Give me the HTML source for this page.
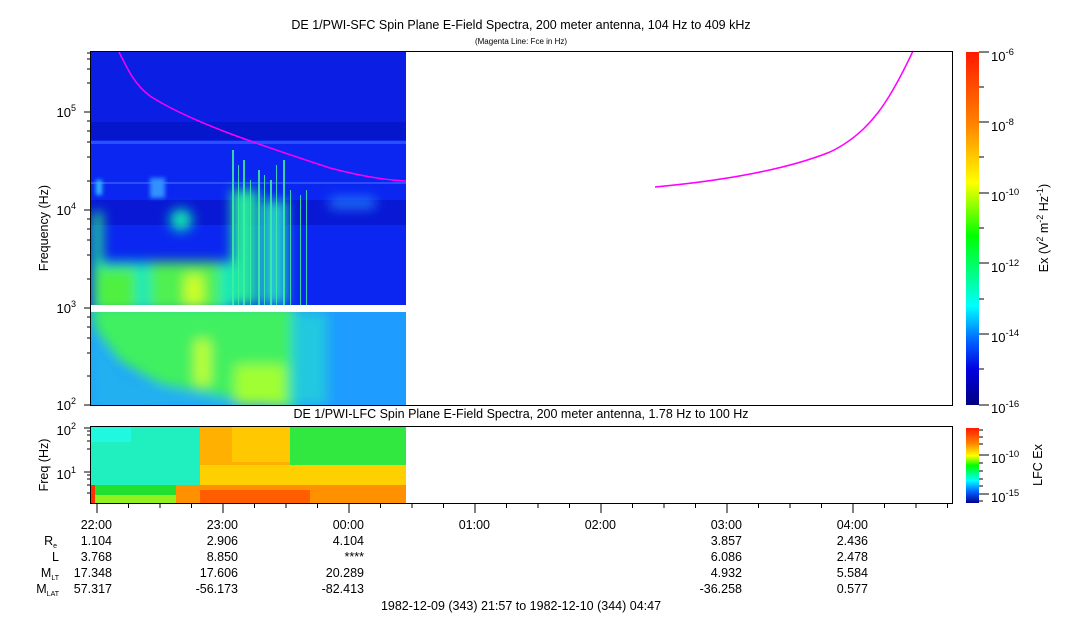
<!DOCTYPE html>
<html><head><meta charset="utf-8"><style>
body{margin:0;background:#fff;width:1083px;height:620px;overflow:hidden;font-family:"Liberation Sans",sans-serif}
svg{position:absolute;left:0;top:0}
text{font-family:"Liberation Sans",sans-serif;fill:#000}
</style></head><body>
<svg width="1083" height="620" viewBox="0 0 1083 620">
<defs>
<linearGradient id="cb" x1="0" y1="0" x2="0" y2="1">
<stop offset="0" stop-color="#ff1a00"/><stop offset="0.2" stop-color="#ff8000"/>
<stop offset="0.37" stop-color="#ffff00"/><stop offset="0.52" stop-color="#00ff00"/>
<stop offset="0.65" stop-color="#00ffa0"/><stop offset="0.72" stop-color="#00ffff"/>
<stop offset="0.82" stop-color="#0060ff"/><stop offset="0.9" stop-color="#0000e0"/>
<stop offset="1" stop-color="#000080"/></linearGradient>
<linearGradient id="cb2" x1="0" y1="0" x2="0" y2="1">
<stop offset="0" stop-color="#ff1a00"/><stop offset="0.2" stop-color="#ff8000"/>
<stop offset="0.37" stop-color="#ffff00"/><stop offset="0.5" stop-color="#00ff00"/>
<stop offset="0.7" stop-color="#00ffff"/><stop offset="0.85" stop-color="#0060ff"/>
<stop offset="1" stop-color="#000090"/></linearGradient>
<filter id="bl" filterUnits="userSpaceOnUse" x="0" y="0" width="1083" height="620"><feGaussianBlur stdDeviation="6"/></filter>
<filter id="bl2" filterUnits="userSpaceOnUse" x="0" y="0" width="1083" height="620"><feGaussianBlur stdDeviation="2"/></filter>
<clipPath id="c1"><rect x="91" y="52" width="315" height="253"/></clipPath>
<clipPath id="c2"><rect x="91" y="312" width="315" height="93"/></clipPath>
<clipPath id="c3"><rect x="91" y="427" width="315" height="76"/></clipPath>
</defs>
<text x="521" y="29" font-size="12.5" text-anchor="middle">DE 1/PWI-SFC  Spin Plane E-Field Spectra, 200 meter antenna, 104 Hz to 409 kHz</text>
<text x="521" y="44" font-size="8" text-anchor="middle">(Magenta Line: Fce in Hz)</text>
<g clip-path="url(#c1)">
<rect x="91" y="52" width="315" height="253" fill="#0a26f0"/>
<rect x="91" y="52" width="315" height="75" fill="#0a1ee4"/>
<rect x="91" y="122" width="315" height="18" fill="#0616cc"/>
<rect x="91" y="141" width="315" height="3" fill="#2a50ff"/>
<rect x="91" y="182" width="315" height="2" fill="#2a50ff"/>
<rect x="91" y="200" width="315" height="25" fill="#0818d4"/>
<g filter="url(#bl)">
<rect x="92" y="262" width="140" height="50" fill="#10e8c0"/>
<rect x="93" y="212" width="9" height="90" fill="#20f080"/>
<rect x="96" y="268" width="40" height="45" fill="#50f040"/>
<rect x="150" y="262" width="70" height="50" fill="#50f050"/>
<rect x="185" y="275" width="18" height="30" fill="#d0ff20"/>
<circle cx="181" cy="220" r="11" fill="#10f0b0"/>
<rect x="232" y="190" width="25" height="115" fill="#20e8a0"/>
<rect x="262" y="200" width="25" height="105" fill="#20c8d0"/>
<rect x="330" y="198" width="45" height="10" fill="#2080ff"/>
</g>
<g fill="#40f0a0" opacity="0.85">
<rect x="232" y="150" width="2" height="155"/><rect x="238" y="165" width="1" height="140"/>
<rect x="243" y="160" width="2" height="145"/><rect x="250" y="180" width="1" height="125"/>
<rect x="258" y="170" width="2" height="135"/><rect x="264" y="175" width="1" height="130"/>
<rect x="270" y="180" width="2" height="125"/><rect x="276" y="165" width="1" height="140"/>
<rect x="283" y="160" width="2" height="145"/><rect x="290" y="190" width="1" height="115"/>
<rect x="300" y="195" width="1" height="110"/><rect x="306" y="190" width="1" height="115"/>
</g>
<rect x="96" y="180" width="6" height="15" fill="#30c0ff" filter="url(#bl2)"/>
<rect x="150" y="178" width="15" height="20" fill="#3090ff" filter="url(#bl2)"/>
</g>
<g clip-path="url(#c2)">
<rect x="91" y="312" width="315" height="93" fill="#1e9cff"/>
<g filter="url(#bl)">
<polygon points="91,305 295,305 295,410 235,400 160,385 120,362 95,330" fill="#40f060"/>
<polygon points="91,335 120,372 160,390 230,402 230,410 91,410" fill="#20b0f0"/>
<rect x="195" y="340" width="15" height="45" fill="#c0ff30"/>
<rect x="235" y="365" width="50" height="40" fill="#a0ff30"/>
<rect x="292" y="312" width="35" height="93" fill="#20c8e0"/>
</g>
</g>
<path d="M119,52 C128,70 135,85 150,96 C190,122 260,145 330,168 C360,176 385,180 406,181" fill="none" stroke="#ff00ff" stroke-width="1.5"/>
<path d="M655,187 C730,180 790,168 830,152 C870,133 890,100 913,51" fill="none" stroke="#ff00ff" stroke-width="1.5"/>
<rect x="90.5" y="51.5" width="862" height="354" fill="none" stroke="#000"/>
<g stroke="#000">
<line x1="84" y1="112" x2="91" y2="112"/><line x1="84" y1="210" x2="91" y2="210"/>
<line x1="84" y1="308" x2="91" y2="308"/><line x1="84" y1="405" x2="91" y2="405"/>
<line x1="87" y1="53" x2="91" y2="53"/><line x1="87" y1="59" x2="91" y2="59"/><line x1="87" y1="69" x2="91" y2="69"/><line x1="87" y1="83" x2="91" y2="83"/>
<line x1="87" y1="121" x2="91" y2="121"/><line x1="87" y1="131" x2="91" y2="131"/><line x1="87" y1="142" x2="91" y2="142"/><line x1="87" y1="157" x2="91" y2="157"/><line x1="87" y1="181" x2="91" y2="181"/>
<line x1="87" y1="219" x2="91" y2="219"/><line x1="87" y1="229" x2="91" y2="229"/><line x1="87" y1="240" x2="91" y2="240"/><line x1="87" y1="255" x2="91" y2="255"/><line x1="87" y1="279" x2="91" y2="279"/>
<line x1="87" y1="317" x2="91" y2="317"/><line x1="87" y1="327" x2="91" y2="327"/><line x1="87" y1="338" x2="91" y2="338"/><line x1="87" y1="353" x2="91" y2="353"/><line x1="87" y1="376" x2="91" y2="376"/>
</g>
<g font-size="13" text-anchor="end">
<text x="76" y="117">10<tspan font-size="9" dy="-6">5</tspan></text>
<text x="76" y="215">10<tspan font-size="9" dy="-6">4</tspan></text>
<text x="76" y="313">10<tspan font-size="9" dy="-6">3</tspan></text>
<text x="76" y="410">10<tspan font-size="9" dy="-6">2</tspan></text>
</g>
<text transform="translate(48,228) rotate(-90)" font-size="12.5" text-anchor="middle">Frequency (Hz)</text>
<rect x="966" y="52" width="13" height="353" fill="url(#cb)"/>
<g stroke="#000"><line x1="979" y1="52" x2="989" y2="52"/><line x1="979" y1="122" x2="989" y2="122"/><line x1="979" y1="193" x2="989" y2="193"/><line x1="979" y1="263" x2="989" y2="263"/><line x1="979" y1="334" x2="989" y2="334"/><line x1="979" y1="405" x2="989" y2="405"/>
<line x1="979" y1="87" x2="984" y2="87"/><line x1="979" y1="157" x2="984" y2="157"/><line x1="979" y1="228" x2="984" y2="228"/><line x1="979" y1="299" x2="984" y2="299"/><line x1="979" y1="369" x2="984" y2="369"/></g>
<g font-size="13">
<text x="991" y="61">10<tspan font-size="9.5" dy="-6">-6</tspan></text>
<text x="991" y="131">10<tspan font-size="9.5" dy="-6">-8</tspan></text>
<text x="991" y="201">10<tspan font-size="9.5" dy="-6">-10</tspan></text>
<text x="991" y="272">10<tspan font-size="9.5" dy="-6">-12</tspan></text>
<text x="991" y="342">10<tspan font-size="9.5" dy="-6">-14</tspan></text>
<text x="991" y="413">10<tspan font-size="9.5" dy="-6">-16</tspan></text>
</g>
<text transform="translate(1048,228) rotate(-90)" font-size="12.5" text-anchor="middle">Ex (V<tspan font-size="9" dy="-5">2</tspan><tspan dy="5"> m</tspan><tspan font-size="9" dy="-5">-2</tspan><tspan dy="5"> Hz</tspan><tspan font-size="9" dy="-5">-1</tspan><tspan dy="5">)</tspan></text>
<text x="521" y="418" font-size="12.5" text-anchor="middle">DE 1/PWI-LFC  Spin Plane E-Field Spectra, 200 meter antenna, 1.78 Hz to 100 Hz</text>
<g clip-path="url(#c3)">
<rect x="91" y="427" width="315" height="76" fill="#20f080"/>
<rect x="91" y="427" width="110" height="58" fill="#20f0c0"/>
<rect x="91" y="427" width="40" height="15" fill="#20f8e0"/>
<rect x="200" y="427" width="90" height="76" fill="#ffb000"/>
<rect x="232" y="427" width="60" height="35" fill="#ffc800"/>
<rect x="290" y="427" width="116" height="38" fill="#30e840"/>
<rect x="290" y="465" width="116" height="20" fill="#d8f020"/>
<rect x="200" y="465" width="206" height="20" fill="#ffd000"/>
<rect x="91" y="485" width="85" height="10" fill="#20e030"/>
<rect x="91" y="495" width="85" height="8" fill="#90f020"/>
<rect x="176" y="485" width="230" height="18" fill="#ff9000"/>
<rect x="200" y="490" width="110" height="13" fill="#ff5000" opacity="0.8"/>
<rect x="91" y="485" width="4" height="18" fill="#ff3000"/>
</g>
<rect x="90.5" y="426.5" width="862" height="77" fill="none" stroke="#000"/>
<g stroke="#000"><line x1="84" y1="428" x2="91" y2="428"/><line x1="84" y1="472" x2="91" y2="472"/>
<line x1="87" y1="431" x2="91" y2="431"/><line x1="87" y1="435" x2="91" y2="435"/><line x1="87" y1="441" x2="91" y2="441"/><line x1="87" y1="449" x2="91" y2="449"/><line x1="87" y1="475" x2="91" y2="475"/><line x1="87" y1="479" x2="91" y2="479"/><line x1="87" y1="485" x2="91" y2="485"/><line x1="87" y1="493" x2="91" y2="493"/></g>
<g font-size="13" text-anchor="end">
<text x="76" y="435">10<tspan font-size="9" dy="-6">2</tspan></text>
<text x="76" y="479">10<tspan font-size="9" dy="-6">1</tspan></text>
</g>
<text transform="translate(48,465) rotate(-90)" font-size="12.5" text-anchor="middle">Freq (Hz)</text>
<rect x="966" y="428" width="13" height="75" fill="url(#cb2)"/>
<g stroke="#000"><line x1="979" y1="455" x2="989" y2="455"/><line x1="979" y1="494" x2="989" y2="494"/>
<line x1="979" y1="430" x2="983" y2="430"/><line x1="979" y1="437" x2="983" y2="437"/><line x1="979" y1="444" x2="983" y2="444"/><line x1="979" y1="463" x2="983" y2="463"/><line x1="979" y1="471" x2="983" y2="471"/><line x1="979" y1="479" x2="983" y2="479"/><line x1="979" y1="486" x2="983" y2="486"/><line x1="979" y1="501" x2="983" y2="501"/></g>
<g font-size="13"><text x="991" y="463">10<tspan font-size="9.5" dy="-6">-10</tspan></text><text x="991" y="502">10<tspan font-size="9.5" dy="-6">-15</tspan></text></g>
<text transform="translate(1042,465) rotate(-90)" font-size="12.5" text-anchor="middle">LFC Ex</text>
<g stroke="#000">
<line x1="97" y1="503" x2="97" y2="513"/><line x1="223" y1="503" x2="223" y2="513"/><line x1="349" y1="503" x2="349" y2="513"/><line x1="475" y1="503" x2="475" y2="513"/><line x1="601" y1="503" x2="601" y2="513"/><line x1="727" y1="503" x2="727" y2="513"/><line x1="853" y1="503" x2="853" y2="513"/>
<line x1="128.5" y1="503" x2="128.5" y2="508"/><line x1="160" y1="503" x2="160" y2="508"/><line x1="191.5" y1="503" x2="191.5" y2="508"/>
<line x1="254.5" y1="503" x2="254.5" y2="508"/><line x1="286" y1="503" x2="286" y2="508"/><line x1="317.5" y1="503" x2="317.5" y2="508"/>
<line x1="380.5" y1="503" x2="380.5" y2="508"/><line x1="412" y1="503" x2="412" y2="508"/><line x1="443.5" y1="503" x2="443.5" y2="508"/>
<line x1="506.5" y1="503" x2="506.5" y2="508"/><line x1="538" y1="503" x2="538" y2="508"/><line x1="569.5" y1="503" x2="569.5" y2="508"/>
<line x1="632.5" y1="503" x2="632.5" y2="508"/><line x1="664" y1="503" x2="664" y2="508"/><line x1="695.5" y1="503" x2="695.5" y2="508"/>
<line x1="758.5" y1="503" x2="758.5" y2="508"/><line x1="790" y1="503" x2="790" y2="508"/><line x1="821.5" y1="503" x2="821.5" y2="508"/>
<line x1="884.5" y1="503" x2="884.5" y2="508"/><line x1="916" y1="503" x2="916" y2="508"/><line x1="947.5" y1="503" x2="947.5" y2="508"/>
</g>
<g font-size="12.5" text-anchor="end">
<text x="112" y="529">22:00</text><text x="238" y="529">23:00</text><text x="364" y="529">00:00</text><text x="490" y="529">01:00</text><text x="616" y="529">02:00</text><text x="742" y="529">03:00</text><text x="868" y="529">04:00</text>
<text x="112" y="545">1.104</text><text x="238" y="545">2.906</text><text x="364" y="545">4.104</text><text x="742" y="545">3.857</text><text x="868" y="545">2.436</text>
<text x="112" y="561">3.768</text><text x="238" y="561">8.850</text><text x="364" y="561">****</text><text x="742" y="561">6.086</text><text x="868" y="561">2.478</text>
<text x="112" y="577">17.348</text><text x="238" y="577">17.606</text><text x="364" y="577">20.289</text><text x="742" y="577">4.932</text><text x="868" y="577">5.584</text>
<text x="112" y="593">57.317</text><text x="238" y="593">-56.173</text><text x="364" y="593">-82.413</text><text x="742" y="593">-36.258</text><text x="868" y="593">0.577</text>
<text x="57" y="545">R<tspan font-size="7" dy="3">e</tspan></text>
<text x="59" y="561">L</text>
<text x="59" y="577">M<tspan font-size="7" dy="3">LT</tspan></text>
<text x="59" y="593">M<tspan font-size="7" dy="3">LAT</tspan></text>
</g>
<text x="521" y="610" font-size="12.5" text-anchor="middle">1982-12-09 (343) 21:57 to 1982-12-10 (344) 04:47</text>
</svg>
</body></html>
